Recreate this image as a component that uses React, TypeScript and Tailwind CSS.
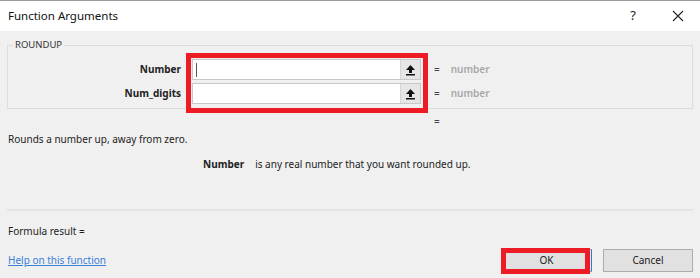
import React from "react";

function UploadIcon() {
  return (
    <svg width="11" height="12" viewBox="0 0 11 12" className="block">
      <polygon points="5.5,1 1,6 10,6" fill="#111" />
      <rect x="4" y="6" width="3" height="3" fill="#111" />
      <rect x="1" y="10" width="9" height="1.5" fill="#111" />
    </svg>
  );
}

function ArgRow({ label, cursor }: { label: string; cursor?: boolean }) {
  return (
    <div className="flex items-center h-[21px]">
      <div className="w-[173px] text-right font-bold text-[#222]">{label}</div>
      <div className="ml-[11px] w-[229px] h-[21px] bg-white border border-[#c8c8c8] flex items-stretch">
        <div className="flex-1 flex items-center pl-[3px]">
          {cursor && <span className="block w-px h-[14px] bg-[#555]" />}
        </div>
        <div className="w-[20px] bg-[#e6e6e6] border-l border-[#d4d4d4] flex items-center justify-center">
          <UploadIcon />
        </div>
      </div>
      <span className="ml-[13px] text-[#444]">=</span>
      <span className="ml-[11px] font-semibold text-[#a8a8a8]">number</span>
    </div>
  );
}

export default function App() {
  return (
    <div
      className="relative w-[700px] h-[278px] overflow-hidden bg-[#f0f0f0] text-[10px] text-[#222]"
      style={{ fontFamily: '"Noto Sans", "Open Sans", sans-serif' }}
    >
      {/* Top edge of the sheet behind */}
      <div className="h-px bg-[#9a9a9a]" />

      {/* Title bar */}
      <div className="h-[30px] bg-white flex items-center pl-[8px] pr-[16px]">
        <span className="text-[11.5px] text-[#111]">Function Arguments</span>
        <span className="ml-auto text-[13px] text-[#222]">?</span>
        <svg width="12" height="12" viewBox="0 0 12 12" className="ml-[36px]">
          <path d="M1 1 L11 11 M11 1 L1 11" stroke="#222" strokeWidth="1.1" />
        </svg>
      </div>

      <div className="px-[7px]">
        {/* Argument group */}
        <div className="relative mt-[14px] h-[64px] border border-[#dcdcdc]">
          <span className="absolute left-[5px] -top-[7px] px-[2px] bg-[#f0f0f0] text-[9.5px] leading-[12px] text-[#333]">
            ROUNDUP
          </span>
          <div className="pt-[13px] flex flex-col gap-[3px]">
            <ArgRow label="Number" cursor />
            <ArgRow label="Num_digits" />
          </div>
        </div>

        <div className="mt-[4px] leading-[16px] pl-[427px] text-[#444]">=</div>
        <div className="mt-[2px] leading-[16px] pl-px">Rounds a number up, away from zero.</div>
        <div className="mt-[9px] leading-[16px] flex">
          <span className="ml-[196px] font-bold">Number</span>
          <span className="ml-[11px]">is any real number that you want rounded up.</span>
        </div>

        <div className="mt-[37px] h-[2px] bg-[#e4e4e4]" />

        <div className="mt-[12px] leading-[16px] pl-px">Formula result =</div>

        <div className="mt-[10px] h-[23px] flex items-center">
          <a href="#" className="pl-px text-[#3b7fd9] underline">Help on this function</a>
          <div className="ml-auto flex gap-[11px]">
            <button className="relative w-[91px] h-[23px] bg-[#e1e1e1] border border-[#adadad] border-r-[#2f7fd6] text-[#222]">
              OK
              <span className="absolute -left-px -top-[2px] w-[89px] h-[26px] border-[5px] border-[#ed1c24]" />
            </button>
            <button className="w-[90px] h-[23px] bg-[#e1e1e1] border border-[#adadad] text-[#222]">
              Cancel
            </button>
          </div>
        </div>
      </div>

      {/* Red highlight around argument inputs */}
      <div className="absolute left-[186px] top-[53px] w-[242px] h-[60px] border-[5px] border-[#ed1c24]" />
    </div>
  );
}
